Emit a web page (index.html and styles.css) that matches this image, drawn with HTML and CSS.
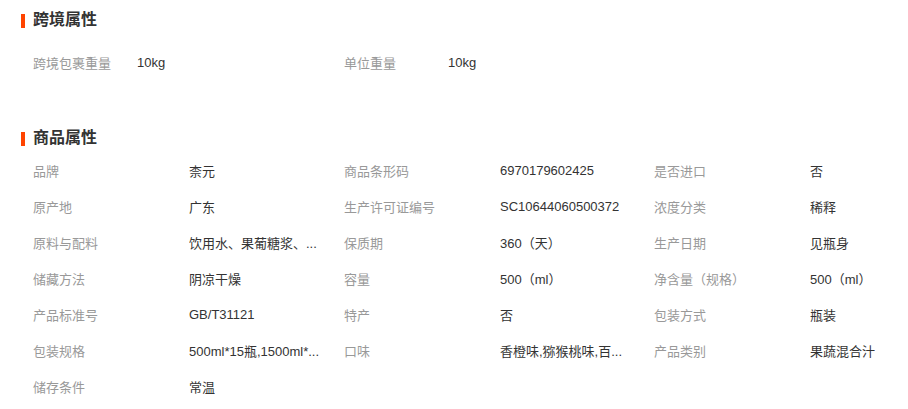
FILE: index.html
```html
<!DOCTYPE html>
<html lang="zh-CN">
<head>
<meta charset="utf-8">
<link rel="stylesheet" href="styles.css">
</head>
<body>
<div class="page">
  <section class="section section-cross">
    <h2 class="title">跨境属性</h2>
    <div class="grid grid-cross">
      <div class="item"><span class="label">跨境包裹重量</span><span class="value">10kg</span></div>
      <div class="item"><span class="label">单位重量</span><span class="value">10kg</span></div>
    </div>
  </section>
  <section class="section section-goods">
    <h2 class="title">商品属性</h2>
    <div class="grid grid-goods">
      <div class="item"><span class="label">品牌</span><span class="value">柰元</span></div>
      <div class="item"><span class="label">商品条形码</span><span class="value">6970179602425</span></div>
      <div class="item"><span class="label">是否进口</span><span class="value">否</span></div>
      <div class="item"><span class="label">原产地</span><span class="value">广东</span></div>
      <div class="item"><span class="label">生产许可证编号</span><span class="value">SC10644060500372</span></div>
      <div class="item"><span class="label">浓度分类</span><span class="value">稀释</span></div>
      <div class="item"><span class="label">原料与配料</span><span class="value">饮用水、果葡糖浆、...</span></div>
      <div class="item"><span class="label">保质期</span><span class="value">360（天）</span></div>
      <div class="item"><span class="label">生产日期</span><span class="value">见瓶身</span></div>
      <div class="item"><span class="label">储藏方法</span><span class="value">阴凉干燥</span></div>
      <div class="item"><span class="label">容量</span><span class="value">500（ml）</span></div>
      <div class="item"><span class="label">净含量（规格）</span><span class="value">500（ml）</span></div>
      <div class="item"><span class="label">产品标准号</span><span class="value">GB/T31121</span></div>
      <div class="item"><span class="label">特产</span><span class="value">否</span></div>
      <div class="item"><span class="label">包装方式</span><span class="value">瓶装</span></div>
      <div class="item"><span class="label">包装规格</span><span class="value">500ml*15瓶,1500ml*...</span></div>
      <div class="item"><span class="label">口味</span><span class="value">香橙味,猕猴桃味,百...</span></div>
      <div class="item"><span class="label">产品类别</span><span class="value">果蔬混合汁</span></div>
      <div class="item"><span class="label">储存条件</span><span class="value">常温</span></div>
    </div>
  </section>
</div>
</body>
</html>
```

FILE: styles.css
```css
html, body {
  margin: 0;
  padding: 0;
  background: #fff;
}
body {
  font-family: "Liberation Sans", "Noto Sans CJK SC", sans-serif;
  font-size: 13px;
  color: #333;
}
.page {
  width: 908px;
  padding-top: 10px;
  overflow: hidden;
}
.section-cross {
  height: 118px;
}
.title {
  position: relative;
  margin: 0 0 0 21px;
  padding-left: 12px;
  height: 20px;
  line-height: 20px;
  font-size: 16px;
  font-weight: bold;
  color: #333;
}
.title::before {
  content: "";
  position: absolute;
  left: 0;
  top: 4px;
  width: 4px;
  height: 14px;
  background: #ff4400;
}
.grid {
  display: grid;
  grid-template-columns: 311px 310px 254px;
  padding-left: 33px;
}
.grid-cross {
  margin-top: 14px;
}
.grid-goods {
  margin-top: 4px;
}
.item {
  display: flex;
  height: 36px;
  align-items: center;
  white-space: nowrap;
  min-width: 0;
}
.label {
  color: #999;
  flex: none;
}
.grid-cross .label {
  width: 104px;
}
.grid-goods .label {
  width: 156px;
}
.value {
  color: #333;
  overflow: hidden;
}
```
